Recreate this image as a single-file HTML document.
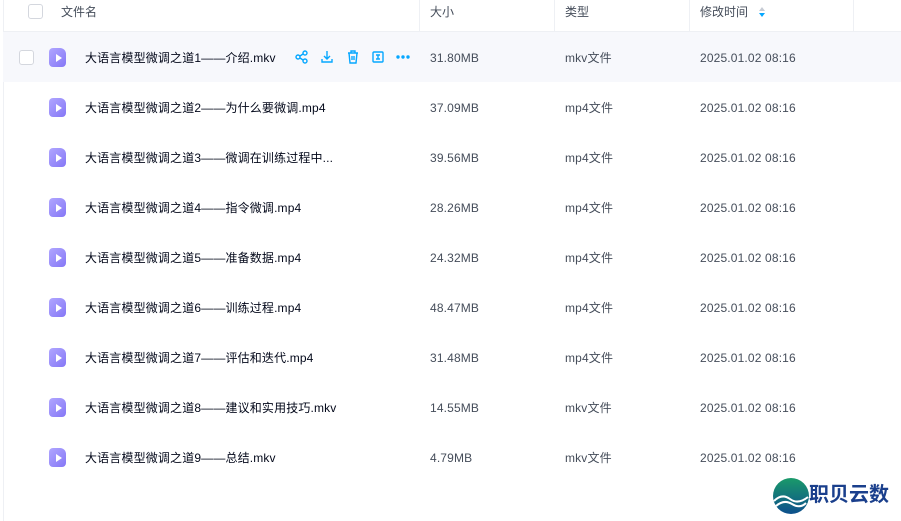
<!DOCTYPE html>
<html><head><meta charset="utf-8"><style>
body{margin:0;width:901px;height:521px;background:#fff;font-family:"Liberation Sans","Noto Sans CJK SC",sans-serif;position:relative;overflow:hidden;color:#03081a}
.a{position:absolute}
.h{top:4px;font-size:12px;color:#454d5a;line-height:16px}
.sep{top:0;width:1px;height:31px;background:#eef0f4}
.cb{width:13px;height:13px;border:1px solid #d4d7de;border-radius:3px;background:#fff}
.row{position:absolute;left:3px;width:898px;height:50px}
.ic{position:absolute;left:49px;width:17px;height:19px;border-radius:4px 6px 4px 4px;background:linear-gradient(135deg,#b0a6ff,#8577f6)}
.ic:after{content:"";position:absolute;left:7px;top:6px;border-left:6px solid #fff;border-top:4px solid transparent;border-bottom:4px solid transparent}
.t{position:absolute;font-size:12px;line-height:16px;color:#03081a;letter-spacing:0.15px;margin-top:1px}
.g{color:#454d5a}
</style></head><body>
<div class="a" style="left:3px;top:0;width:1px;height:521px;background:#eef0f4"></div>
<div class="a cb" style="left:28px;top:4px"></div>
<div class="a h" style="left:61px">文件名</div>
<div class="a sep" style="left:419px"></div>
<div class="a h" style="left:430px">大小</div>
<div class="a sep" style="left:554px"></div>
<div class="a h" style="left:565px">类型</div>
<div class="a sep" style="left:689px"></div>
<div class="a h" style="left:700px">修改时间</div>
<svg class="a" style="left:758px;top:6px" width="8" height="12"><path d="M4 1L7 5H1Z" fill="#c6cbd4"/><path d="M4 11L7 7H1Z" fill="#06a7ff"/></svg>
<div class="a sep" style="left:853px"></div>
<div class="a" style="left:3px;top:31px;width:898px;height:1px;background:#eef0f4"></div>
<div class="row" style="top:32px;background:#f7f8fc"></div>
<div class="a cb" style="left:19px;top:50px"></div>
<svg class="a" style="left:295px;top:50px" width="120" height="14" fill="none" stroke="#06a7ff" stroke-width="1.4">
<circle cx="3" cy="7" r="2"/><circle cx="10" cy="3" r="2"/><circle cx="10" cy="11" r="2"/><path d="M5 6L8 4M5 8L8 10"/>
<path d="M32 1V9M29 6L32 9L35 6M27 9V12H37V9"/>
<path d="M53 3H63M56 3V1H60V3M54 3L55 13H61L62 3M57 6V10M59 6V10"/>
<rect x="78" y="2" width="10" height="10" rx="1"/><path d="M81 5H85M83 5V9M81 9H85"/>
<circle cx="103" cy="7" r="1" fill="#06a7ff"/><circle cx="108" cy="7" r="1" fill="#06a7ff"/><circle cx="113" cy="7" r="1" fill="#06a7ff"/>
</svg>
<div class="ic" style="top:48px"></div><div class="t" style="left:85px;top:49px">大语言模型微调之道1——介绍.mkv</div><div class="t g" style="left:430px;top:49px">31.80MB</div><div class="t g" style="left:565px;top:49px">mkv文件</div><div class="t g" style="left:700px;top:49px">2025.01.02 08:16</div>
<div class="ic" style="top:98px"></div><div class="t" style="left:85px;top:99px">大语言模型微调之道2——为什么要微调.mp4</div><div class="t g" style="left:430px;top:99px">37.09MB</div><div class="t g" style="left:565px;top:99px">mp4文件</div><div class="t g" style="left:700px;top:99px">2025.01.02 08:16</div>
<div class="ic" style="top:148px"></div><div class="t" style="left:85px;top:149px">大语言模型微调之道3——微调在训练过程中...</div><div class="t g" style="left:430px;top:149px">39.56MB</div><div class="t g" style="left:565px;top:149px">mp4文件</div><div class="t g" style="left:700px;top:149px">2025.01.02 08:16</div>
<div class="ic" style="top:198px"></div><div class="t" style="left:85px;top:199px">大语言模型微调之道4——指令微调.mp4</div><div class="t g" style="left:430px;top:199px">28.26MB</div><div class="t g" style="left:565px;top:199px">mp4文件</div><div class="t g" style="left:700px;top:199px">2025.01.02 08:16</div>
<div class="ic" style="top:248px"></div><div class="t" style="left:85px;top:249px">大语言模型微调之道5——准备数据.mp4</div><div class="t g" style="left:430px;top:249px">24.32MB</div><div class="t g" style="left:565px;top:249px">mp4文件</div><div class="t g" style="left:700px;top:249px">2025.01.02 08:16</div>
<div class="ic" style="top:298px"></div><div class="t" style="left:85px;top:299px">大语言模型微调之道6——训练过程.mp4</div><div class="t g" style="left:430px;top:299px">48.47MB</div><div class="t g" style="left:565px;top:299px">mp4文件</div><div class="t g" style="left:700px;top:299px">2025.01.02 08:16</div>
<div class="ic" style="top:348px"></div><div class="t" style="left:85px;top:349px">大语言模型微调之道7——评估和迭代.mp4</div><div class="t g" style="left:430px;top:349px">31.48MB</div><div class="t g" style="left:565px;top:349px">mp4文件</div><div class="t g" style="left:700px;top:349px">2025.01.02 08:16</div>
<div class="ic" style="top:398px"></div><div class="t" style="left:85px;top:399px">大语言模型微调之道8——建议和实用技巧.mkv</div><div class="t g" style="left:430px;top:399px">14.55MB</div><div class="t g" style="left:565px;top:399px">mkv文件</div><div class="t g" style="left:700px;top:399px">2025.01.02 08:16</div>
<div class="ic" style="top:448px"></div><div class="t" style="left:85px;top:449px">大语言模型微调之道9——总结.mkv</div><div class="t g" style="left:430px;top:449px">4.79MB</div><div class="t g" style="left:565px;top:449px">mkv文件</div><div class="t g" style="left:700px;top:449px">2025.01.02 08:16</div>
<svg class="a" style="left:772px;top:477px" width="38" height="38"><defs><linearGradient id="lg" x1="0" y1="0" x2="0" y2="1"><stop offset="0" stop-color="#1a9a6a"/><stop offset="1" stop-color="#0d4f8c"/></linearGradient></defs><circle cx="19" cy="19" r="18" fill="url(#lg)"/><path d="M2 24Q10 16 18 22T36 20M4 29Q12 22 20 27T34 26" stroke="#fff" stroke-width="2" fill="none"/></svg>
<div class="a" style="left:809px;top:483px;font-size:20px;font-weight:bold;color:#1a3f8c;line-height:24px">职贝云数</div>
</body></html>
